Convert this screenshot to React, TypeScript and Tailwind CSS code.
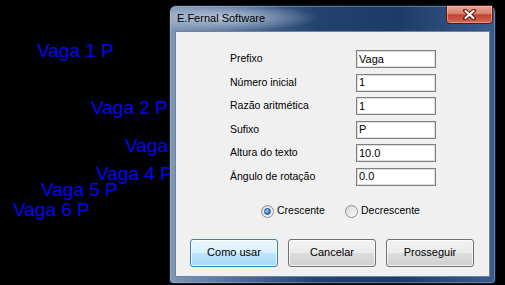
import React from 'react'

const labels = [
  { text: 'Vaga 1 P', x: 37, y: 41 },
  { text: 'Vaga 2 P', x: 91, y: 98 },
  { text: 'Vaga 3 P', x: 125, y: 136 },
  { text: 'Vaga 4 P', x: 96, y: 164 },
  { text: 'Vaga 5 P', x: 41, y: 180 },
  { text: 'Vaga 6 P', x: 13, y: 200 },
]

const fields = [
  { label: 'Prefixo', value: 'Vaga' },
  { label: 'Número inicial', value: '1' },
  { label: 'Razão aritmética', value: '1' },
  { label: 'Sufixo', value: 'P' },
  { label: 'Altura do texto', value: '10.0' },
  { label: 'Ângulo de rotação', value: '0.0' },
]

function Radio({ checked, label, className }: { checked?: boolean; label: string; className?: string }) {
  return (
    <div className={`flex items-center gap-[3px] ${className ?? ''}`}>
      <span className="flex h-[13px] w-[13px] items-center justify-center rounded-full border border-[#8e8f8f] bg-[linear-gradient(135deg,#d6d6d6,#fbfbfb)]">
        {checked && (
          <span className="h-[7px] w-[7px] rounded-full border border-[#1b4f86] bg-[radial-gradient(circle_at_35%_35%,#a8d8ff,#2a6fc0_70%)]" />
        )}
      </span>
      <span>{label}</span>
    </div>
  )
}

function Button({ children, primary }: { children: React.ReactNode; primary?: boolean }) {
  return (
    <button
      className={
        primary
          ? 'h-[28px] w-[88px] rounded-[3px] border border-[#3c7fb1] bg-[linear-gradient(#eaf6fd,#d9f0fc_50%,#bee6fd_50%,#a7d9f5)] shadow-[inset_0_0_0_1px_rgba(255,255,255,0.7)]'
          : 'h-[28px] w-[88px] rounded-[3px] border border-[#707070] bg-[linear-gradient(#f2f2f2,#ebebeb_50%,#dddddd_50%,#cfcfcf)] shadow-[inset_0_0_0_1px_rgba(255,255,255,0.7)]'
      }
    >
      {children}
    </button>
  )
}

export default function App() {
  return (
    <div className="relative h-[285px] w-[505px] overflow-hidden bg-black font-['Liberation_Sans',Arial,sans-serif]">
      {/* texts on the drawing */}
      {labels.map((l) => (
        <span
          key={l.text}
          className="absolute whitespace-nowrap text-[19px] leading-none text-[#0505f5]"
          style={{ left: l.x, top: l.y }}
        >
          {l.text}
        </span>
      ))}

      {/* dialog window */}
      <div className="absolute left-[169px] top-[5px] flex h-[279px] w-[327px] flex-col rounded-t-[7px] rounded-b-[4px] border border-[#101c2e] bg-[linear-gradient(90deg,#8197b4_0%,#4e6c96_22%,#23426f_45%,#1d3b68_70%,#3a5c8c_100%)] px-[5px] pb-[6px] shadow-[inset_0_0_0_1px_rgba(180,200,230,0.35)]">
        {/* title glow */}
        <div className="pointer-events-none absolute left-0 top-0 h-[26px] w-[150px] rounded-tl-[7px] bg-[radial-gradient(ellipse_at_35%_45%,rgba(200,212,228,0.85),rgba(200,212,228,0)_70%)]" />
        <div className="relative flex h-[25px] items-center pl-[2px] text-[11px] text-black">
          E.Fernal Software
        </div>
        {/* close button */}
        <div className="absolute right-[2px] top-[-1px] flex h-[19px] w-[47px] items-center justify-center rounded-b-[4px] border border-[#5a1a12] bg-[linear-gradient(#e8a898,#d67f6c_45%,#c4412c_52%,#cf6b56)] shadow-[inset_0_0_0_1px_rgba(255,200,190,0.45)]">
          <svg width="13" height="11" viewBox="0 0 13 11">
            <path d="M2 1.5 L11 9.5 M11 1.5 L2 9.5" stroke="#5b1d14" strokeWidth="4" strokeLinecap="round" />
            <path d="M2.5 2 L10.5 9 M10.5 2 L2.5 9" stroke="#ffffff" strokeWidth="2.2" strokeLinecap="round" />
          </svg>
        </div>

        {/* client area */}
        <div className="relative flex-1 border border-[#6f82a0] bg-[#f0f0f0] text-[10.5px] text-black">
          <div className="grid grid-cols-[126px_80px] gap-y-[5.5px] pl-[54px] pt-[18px]">
            {fields.map((f) => (
              <React.Fragment key={f.label}>
                <div className="flex h-[18px] items-center">{f.label}</div>
                <div className="flex h-[18px] items-center border border-[#7f7f7f] bg-white pl-[2px] text-[11px] shadow-[inset_0_0_0_1px_#dedede]">
                  {f.value}
                </div>
              </React.Fragment>
            ))}
          </div>

          <div className="mt-[19px] flex h-[13px] items-center pl-[85px]">
            <Radio checked label="Crescente" className="w-[84px]" />
            <Radio label="Decrescente" />
          </div>

          <div className="mt-[21px] flex gap-[10px] pl-[14px] text-[11px]">
            <Button primary>Como usar</Button>
            <Button>Cancelar</Button>
            <Button>Prosseguir</Button>
          </div>
        </div>
      </div>
    </div>
  )
}
